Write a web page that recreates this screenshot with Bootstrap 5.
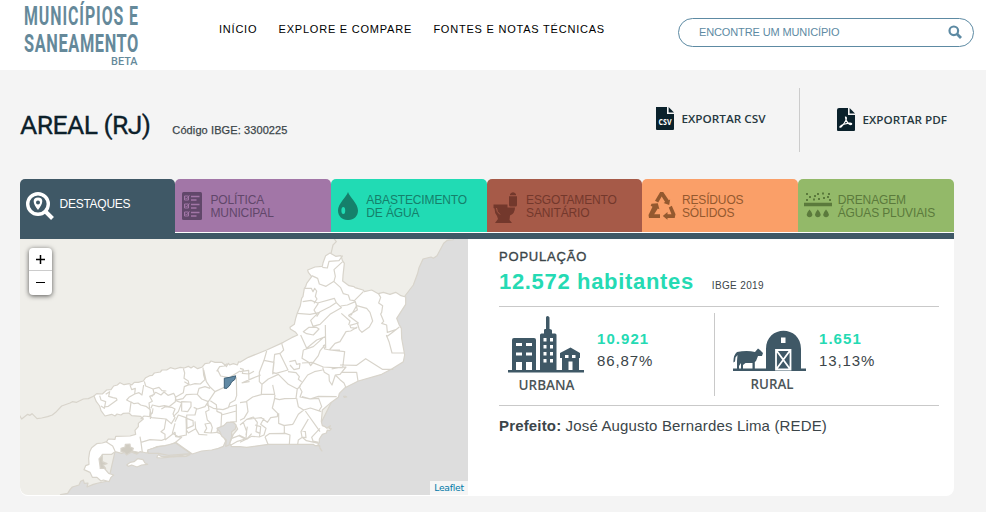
<!DOCTYPE html>
<html lang="pt-BR">
<head>
<meta charset="utf-8">
<meta name="viewport" content="width=device-width, initial-scale=1">
<title>Municípios e Saneamento</title>
<link href="https://cdn.jsdelivr.net/npm/bootstrap@5.3.0/dist/css/bootstrap.min.css" rel="stylesheet">
<style>
body{background:#f4f4f4;font-family:"Liberation Sans",Arial,sans-serif;color:#3b4549;height:512px;overflow:hidden}
svg{display:block;flex:none}
svg text{font-family:"Open Sans",sans-serif}
.site-head{height:70px;padding:0 12px 0 20px}
.brand-logo{padding:0}
.brand-logo svg{overflow:visible}
.brand-logo text{font-family:Roboto,sans-serif}
.main-links{margin-left:76px;gap:21.3px;height:58px;font-size:11px;letter-spacing:.78px}
.main-links a{color:#000;padding:0;white-space:nowrap}
.search-box{width:296px;height:29px;margin-top:18px;border:1px solid #5d8aa3;border-radius:15px;padding:0 11px 0 20px;font-size:11px;color:#5d8aa3}
.search-box span{letter-spacing:-.12px}
.page-wrap{width:934px;margin-left:20px}
.title-row{height:109px}
.city-name{font:400 26.5px/32px Roboto,sans-serif;letter-spacing:-.57px;color:#0d212b;margin:39px 0 0;-webkit-text-stroke:.3px #0d212b}
.ibge-code{font-size:11px;line-height:14px;margin:53px 0 0 22px;letter-spacing:.1px;-webkit-text-stroke:.25px #3b4549}
.export-area{margin-top:18px}
.export-csv{width:144px;height:64px;border-right:1px solid #ccc}
.export-pdf{margin-left:37px;height:64px}
.theme-tabs{height:60px;background:linear-gradient(#f4f4f4 0 53px,#fff 53px 54px,#3f5866 54px)}
.theme-tab{flex:1 1 0;height:53px;border-radius:5px 5px 0 0;padding:13px 0 0 6px;gap:5.5px;font-size:12px;line-height:13px;letter-spacing:-.14px;text-decoration:none}
.theme-tab span{padding-top:2px}
.tab-dest{background:#3f5866;color:#fff;height:60px;flex:0 0 155px}
.tab-dest span{padding-top:6px;letter-spacing:-.25px}
.tab-pol{background:#a276a7;color:#61476a}
.tab-agua{background:#21dbb4;color:#15806b}
.tab-esg{background:#a65a48;color:#73382c}
.tab-res{background:#fa9f68;color:#94592f}
.tab-dren{background:#93b969;color:#5b7a3c}
.data-panel{height:257px;border-radius:0 0 8px 8px;overflow:hidden}
.map-pane{width:448px;height:256px;border-bottom-left-radius:8px;overflow:hidden;flex:none}
.zoom-ctl{left:9px;top:9px;width:23px;border-radius:4px;box-shadow:0 1px 5px rgba(0,0,0,.65);overflow:hidden}
.zoom-ctl a{height:22px;color:#000}
.zoom-ctl a+a{border-top:1px solid #ccc;height:25px;padding-bottom:1px}
.map-credit{right:0;bottom:0;width:38px;height:14px;background:rgba(255,255,255,.7);color:#0078a8;font:9.2px/14px "DejaVu Sans",sans-serif;text-align:center;text-decoration:none;letter-spacing:-.25px}
.facts{width:440px;margin-left:31px}
.facts .fact-title{font-size:13px;line-height:18px;padding-top:9px;letter-spacing:.8px;-webkit-text-stroke:.35px #3b4549}
.pop-line{height:40px;line-height:26px;padding-top:3px}
.pop-total{font-size:22px;letter-spacing:.67px;color:#25dab3}
.pop-src{font-size:10px;margin-left:18px;letter-spacing:.35px;padding-top:4px}
.split-row{height:100px;border-top:1px solid #c9c9c9;border-bottom:1px solid #c9c9c9;padding-top:6px}
.urban{width:216px;height:83px;border-right:1px solid #c9c9c9}
.nums{font-size:15px;line-height:22px;letter-spacing:1.05px;padding-top:15px}
.nums b{color:#25dab3;display:block}
.nums em{font-style:normal;letter-spacing:.9px;display:block}
.mayor{font-size:15px;line-height:20px;padding-top:10px;letter-spacing:.16px;white-space:nowrap}
</style>
</head>
<body>
<header class="site-head bg-white d-flex">
  <a class="brand-logo navbar-brand m-0" href="#">
    <svg width="123" height="70" fill="#65899a" font-weight="700">
      <text x="4" y="25.400" font-size="25.500" letter-spacing="1.500" textLength="115" lengthAdjust="spacingAndGlyphs">MUNICÍPIOS E</text>
      <text x="4" y="51.500" font-size="26.500" letter-spacing="1" textLength="115" lengthAdjust="spacingAndGlyphs">SANEAMENTO</text>
      <text x="91" y="64.500" font-size="10.500" font-weight="500" textLength="26.500" lengthAdjust="spacingAndGlyphs">BETA</text>
    </svg>
  </a>
  <nav class="main-links nav align-items-center flex-nowrap">
    <a class="nav-link" href="#">INÍCIO</a>
    <a class="nav-link" href="#">EXPLORE E COMPARE</a>
    <a class="nav-link" href="#">FONTES E NOTAS TÉCNICAS</a>
  </nav>
  <div class="search-box ms-auto d-flex align-items-center justify-content-between">
    <span>ENCONTRE UM MUNICÍPIO</span>
    <svg width="14" height="16" viewBox="0 0 14 16" fill="none" stroke="#5d8aa3"><circle cx="5.800" cy="5.800" r="4.300" stroke-width="2.200"/><path d="M8.800 8.800l4.200 4.200" stroke-width="2.800"/></svg>
  </div>
</header>

<main class="page-wrap">
  <div class="title-row d-flex">
    <h1 class="city-name">AREAL (RJ)</h1>
    <div class="ibge-code">Código IBGE: 3300225</div>
    <div class="export-area d-flex ms-auto">
      <a class="export-csv" href="#">
        <svg width="120" height="64"><path d="M0 19h11v7h7v15q0 1-1 1H1q-1 0-1-1z" fill="#0a212b"/><path d="M12.600 19l5.400 5.600h-5.400z" fill="#0a212b"/><text x="2.600" y="36.800" font-size="8" font-weight="700" fill="#fff" textLength="13" lengthAdjust="spacingAndGlyphs">CSV</text><text x="25.500" y="34.500" font-size="11.200" font-weight="600" fill="#263840" textLength="84" lengthAdjust="spacingAndGlyphs">EXPORTAR CSV</text></svg>
      </a>
      <a class="export-pdf" href="#">
        <svg width="117" height="64"><path d="M2 20h9v7h7v15q0 1-1 1H1q-1 0-1-1V22q0-2 2-2z" fill="#0a212b"/><path d="M12.600 20l5.400 5.600h-5.400z" fill="#0a212b"/><path d="M8.500 29c2 0 .7 5-4.500 10-2.500 1.200-1-2 4-3 4-1.200 7.500-1.200 6.500.3-1.500 1-6-2-6-7.300z" fill="none" stroke="#fff" stroke-width="1.200"/><text x="25.500" y="35.500" font-size="11.200" font-weight="600" fill="#263840" textLength="84.500" lengthAdjust="spacingAndGlyphs">EXPORTAR PDF</text></svg>
      </a>
    </div>
  </div>

  <nav class="theme-tabs d-flex">
    <a class="theme-tab tab-dest d-flex" href="#">
      <svg width="28" height="28" viewBox="0 0 28 28"><circle cx="12" cy="12" r="10.300" fill="none" stroke="#fff" stroke-width="3.400"/><path d="M19 19l7.500 7.500" stroke="#fff" stroke-width="4"/><path fill="#fff" fill-rule="evenodd" d="M12 5.500c-6 0-5.500 6 0 12.500 5.500-6.500 6-12.500 0-12.500zm0 3a2 2 0 1 1 0 4 2 2 0 0 1 0-4z"/></svg>
      <span>DESTAQUES</span>
    </a>
    <a class="theme-tab tab-pol d-flex" href="#">
      <svg width="24" height="28" viewBox="0 0 24 28"><rect x="1" width="20" height="28" rx="1.500" fill="#61476a"/><g fill="none" stroke="#a276a7" stroke-width="1"><path d="M3.500 4h4v4h-4zM3.500 12h4v4h-4zM3.500 20h4v4h-4z"/><path d="M4 5.500l1.500 1.500 3-3.500M4 13.500l1.500 1.500 3-3.500M4 21.500l1.500 1.500 3-3.500"/><path d="M10 4.500h8.500M10 8h5.500M10 12.500h8.500M10 16h5.500M10 20.500h8.500M10 24h5.500" stroke-width="1.400"/></g></svg>
      <span>POLÍTICA<br>MUNICIPAL</span>
    </a>
    <a class="theme-tab tab-agua d-flex" href="#">
      <svg width="24" height="28" viewBox="0 0 24 28"><path d="M11 0c-1.500 5-10 11.500-10 18.500 0 12.700 20 12.700 20 0C21 11.500 12.500 5 11 0z" fill="#15806b"/><ellipse cx="6.300" cy="18.500" rx="1.900" ry="3.500" fill="#21dbb4"/></svg>
      <span>ABASTECIMENTO<br>DE ÁGUA</span>
    </a>
    <a class="theme-tab tab-esg d-flex" href="#">
      <svg width="28" height="32" viewBox="0 0 28 32" fill="#73382c"><path d="M17 2q3-3.500 6 0v1.200h-6zM16 4.300h8V13q0 1.500-1.500 1.500h-5Q16 14.500 16 13zM.5 12.500h14v3H22q0 6-5 8l-.5 4.500 2.500 3H2l3-4-1-3q-2.500-3-2.500-7.500l-1-.5z"/><path d="M3.500 16q0 4 3.500 6.500" fill="none" stroke="#a65a48"/></svg>
      <span>ESGOTAMENTO<br>SANITÁRIO</span>
    </a>
    <a class="theme-tab tab-res d-flex" href="#">
      <svg width="28" height="28" viewBox="0 0 28 28" fill="#94592f"><path d="M12.200 0h3l5.600 8.200 1.300-.7-.9 5.500-5.600-2 1.500-1-3.400-5.500-3.500 6-3.200-1.800zM3.500 11.700l6.300-.5 1.600 6-1.600-.7-3.600 5.700H12v3.800H1L.5 23l4-8.300-1.800-1zM20.800 15.500l3-1.700 3.700 8.400-.8 3.800h-7.200v1.700l-4.700-3.800 4.700-4v2.300h4z"/></svg>
      <span>RESÍDUOS<br>SÓLIDOS</span>
    </a>
    <a class="theme-tab tab-dren d-flex" href="#">
      <svg width="28" height="28" viewBox="0 0 28 28" fill="#5b7a3c"><path d="M0 10.800h28v3.400H0zM2 1h2v2H2zM5 4h2v2H5zM2 7h2v2H2zM10 3h2v2h-2zM9 6.500h2v2H9zM13 1h2v2h-2zM14 6h2v2h-2zM18 .500h2v2h-2zM19 5h2v2h-2zM24 1h2v2h-2zM23 4h2v2h-2zM25 7h2v2h-2z"/><path id="rain" d="M5.500 17.500q-2.800 3.300-2.800 5c0 3.600 5.700 3.600 5.700 0q0-1.700-2.900-5z"/><use href="#rain" x="8.300"/><use href="#rain" x="16.500"/></svg>
      <span>DRENAGEM<br>ÁGUAS PLUVIAIS</span>
    </a>
  </nav>

  <section class="data-panel bg-white d-flex">
    <div class="map-pane position-relative">
      <svg width="448" height="256" viewBox="0 0 448 256">
        <rect width="448" height="256" fill="#efeee9"/>
        <g transform="translate(-5 -4) scale(.33333)" stroke="#d8d4cb" stroke-width="3.600" stroke-linejoin="round" fill="none">
          <path fill="#ddd" d="M130 790L137 779 158 775 165 764 172 756 192 750 197 739 205 735 208 745 219 744 216 756 235 748 250 744 280 738 300 650 500 600 900 600 1000 400 1172 180 1195 150 1208 115 1212 98 1224 72 1248 66 1255 70 1266 62 1286 25 1297 16 1315 14 1316 8 1400 8 1400 790z"/>
          <path d="M10 535L20 552 38 538 45 541 51 536 66 551 80 549 98 545 112 540 122 532 140 513 165 504 172 500 185 502 205 492 220 491 237 483M955 8L964 20 954 30 948 56"/>
          <path fill="#fff" d="M237 483L245 476 262 477 275 465 288 464 296 453 307 450 315 443 327 449 343 446 350 450 358 442 370 442 385 438 392 428 404 422 412 421 418 414 436 411 441 405 455 405 466 398 480 402 496 397 508 399 520 394 528 399 536 394 548 401 562 396 570 386 583 384 588 378 600 382 620 382 630 390 634 395 640 385 644 390 655 386 667 390 671 380 675 382 700 367 755 345 805 322 830 308 848 300 842 292 826 282 825 277 838 268 842 250 847 234 856 212 860 190 864 184 868 160 872 155 875 145 890 125 880 112 878 105 900 96 922 94 924 84 932 62 945 54 962 64 978 62 982 76 988 85 984 122 983 138 1002 152 1017 155 1020 158 1044 165 1048 170 1070 165 1090 176 1105 172 1125 178 1142 172 1158 182 1172 186 1172 208 1145 250 1152 268 1159 280 1160 310 1169 360 1165 380 1130 402 1100 418 1030 438 990 458 973 475 970 487 945 505 922 525 919 560 922 572 930 575 936 580 946 572 942 581 949 581 944 587 937 585 934 594 922 598 913 612 913 623 909 628 921 648 915 641 914 632 900 632 895 628 760 628 695 637 675 635 650 635 644 625 648 616 655 598 668 582 662 570 655 562 636 563 628 574 608 580 606 592 614 595 626 605 632 618 625 634 610 640 590 645 560 648 532 657 505 638 482 622 460 632 425 635 415 640 400 645 396 654 375 650 365 657 340 648 320 655 300 650 290 658 262 658 258 670 262 680 256 700 268 700 275 708 281 715 296 720 288 727 282 740 265 735 258 738 246 727 232 727 225 712 207 704 212 692 222 688 221 670 224 650 230 638 245 626 262 624 275 620 280 612 300 613 302 604 345 603 362 598 360 586 370 575 370 565 385 552 377 544 350 542 342 534 325 535 318 540 306 537 300 543 290 538 270 543 258 527 254 513 244 500z"/>
          <path fill="#fff" d="M335 690L346 682 357 680 368 671 384 674 390 684 398 688 380 690 366 696 350 690 340 694zM427 663L431 659 440 665 470 664 525 659 515 664 485 665 440 669 426 668z"/>
          <path fill="#ddd" d="M398 645L430 635 450 632 482 624 528 656 460 661 430 655 400 655zM606 580L626 572 636 562 655 562 663 570 661 582 650 590 650 606 642 630 632 634 634 615 620 603 615 591z"/>
          <path fill="#d0ccc2" d="M318 640L330 636 331 628 345 627 346 636 355 640 352 648 370 652 365 657 350 650 335 660 328 652 318 650zM252 672L262 660 262 680 276 686 264 690 272 700 256 700z"/>
          <path d="M254 482L258 495 272 500 268 520 258 513M272 478L284 470 281 484 294 488 304 490 306 495 280 514 268 516M345 450L350 464 361 460 359 477 342 487 335 495 348 502 344 532M359 477L372 473 381 480 386 450M388 439L392 453 414 462 418 478 404 484 412 499 402 504 404 522 408 535 406 552M414 462L432 457 441 467 454 468M410 485L422 472 438 480 447 471 459 481 476 475 482 487 481 500 462 515 448 512 432 515 412 510 408 520M347 500L357 506 369 504 377 510 393 514 406 524 404 545 387 543 377 552M505 400L509 414 507 430 520 438 522 449 508 455 505 473 481 487 484 498M508 440L525 450 540 446 556 447 570 434 566 420 564 398M566 405L574 440 585 456 600 470 580 500 560 492 547 478 552 460 570 455 585 460M600 470L636 453 664 428 665 482 660 496 645 504 640 518 624 524 595 520 576 510M605 409L614 395 628 393 636 386M608 405L617 423 642 428 675 408M480 496L504 491 514 479 547 477M500 500L528 501 528 515 518 530 500 528zM484 498L500 503 490 530 475 545M439 522L451 515 470 517 480 522 474 537 480 548 469 566 453 552 410 548 404 542 412 534 414 520M545 520L540 540 515 540 516 580 535 572 534 557 515 550M536 517L548 522 570 515 580 500M480 565L472 595 490 605 514 600 514 575 513 548 490 540 480 560M540 559L542 581 520 594 514 585M542 581L552 598 577 600M570 567L587 564 592 578 588 594 568 592 575 580zM578 500L582 525 572 530 577 555 588 565M586 497L604 509 606 529 620 535 618 575M619 540L664 528 664 508M642 516L664 510 664 560 645 562M450 615L480 592 482 605 500 607 482 622M273 620L293 633 300 648M378 622L382 652M375 605L378 622 405 614 440 616 450 612 450 598 438 590 448 582 453 552M650 610L672 602 690 612M672 600L696 612 710 596M648 630L665 620 690 612M588 594L606 592"/>
        </g>
        <g transform="translate(220 -4) scale(.33333)" stroke="#d8d4cb" stroke-width="3.600" stroke-linejoin="round" fill="none">
          <path d="M247 97L262 99 267 79 297 77 308 62M215 122L233 130 238 147 258 154 282 139 286 124 282 104 308 80M282 140L302 158 310 176 325 180 330 195 343 197 370 170M195 160L214 160 219 170 224 160 230 168 226 184 231 192 222 205M188 200L213 196 233 204 283 190 289 203 304 218 270 238 240 268 219 274 212 256 230 238 222 225 235 205M172 235L210 238 240 232M230 245L240 230 270 215 288 203M302 213L322 210 346 200 352 225 328 239 326 242 355 264 330 271 332 278 350 280M304 235L330 258 326 270M345 198L350 212 380 220 390 232 398 258 388 276 366 292 358 284 352 264M350 212L334 240 326 240M352 276L332 288 318 290 300 320 285 325 268 345M190 290L207 277 229 277 237 282 220 300 200 296zM256 270L257 340M257 305L230 315 200 340 182 300M415 175L422 187 416 204 428 212 425 232 422 237 431 259 425 265 440 270 442 292 470 283M439 300L447 320 456 354H492M439 306L460 290 478 276M125 325L131 345 120 356 144 405 108 415 98 412 104 358 120 355M80 348L72 376 102 382 98 418M72 376L58 412 58 440 66 448 64 478 104 478 98 450M190 345L186 370 206 382 212 392 235 362 240 348 256 328M190 345L220 335 250 308M250 330L254 342 270 345 314 350 308 398 280 398 250 396 216 382 186 384M268 345L300 345M300 390L350 391 377 371 427 403H460M275 402L295 398 318 396 300 418 285 420M305 412L350 412 354 438M248 398L253 412 267 420 268 438 276 450 286 420 300 434 312 444 318 458M248 405L223 410 203 420 178 455 186 470 180 486 210 492 235 484 290 485M185 440L175 433 178 425 168 413 144 410M148 380L166 376 170 388 180 386 178 400 162 404 150 390M66 448L85 432 115 418 145 448 172 462 182 452M0 400L10 403 7 415 27 417 42 409M0 410L26 406 27 440 5 444M5 444L37 430 62 420M0 503L20 500 24 530 12 550 0 556M18 500L38 486 66 478M105 480L103 495 97 519 113 535 112 545 92 548 82 562 64 548 20 553M104 490L118 494 134 491 168 490 172 460M116 535L116 565 133 572 133 598M170 490L175 515 191 525 211 519 244 530M186 485L212 492 236 490 245 515 236 528M191 525L175 538 162 562 158 568 130 572M196 528L240 590M205 552L183 590 186 606 198 608 196 590 184 586M75 605L88 596 136 595 150 600 148 628M75 605L84 628M173 628L175 615 187 607 199 617 236 625M215 606L219 618 236 622M214 608L240 580M0 570L10 562 20 553 40 546 52 562 48 590 60 595 58 606 72 600 78 580 62 568 72 550M0 622L20 612 35 604 60 606M22 575L18 600M10 562L20 590 18 610M45 570L62 575 60 596M311 484H317L320 486 313 487z"/>
        </g>
        <path d="M204.300 139.200L210 138.300 215.700 136.800 214.800 140.500 211.500 143 210 146 207 149.300 204.300 149.300z" fill="#6189a4" stroke="#3f6178" stroke-width="1"/>
      </svg>
      <div class="zoom-ctl position-absolute bg-white">
        <a class="d-flex align-items-center justify-content-center" href="#" aria-label="Aproximar"><svg width="9" height="9"><path d="M4.500 0v9M0 4.500h9" stroke="#000" stroke-width="1.500"/></svg></a>
        <a class="d-flex align-items-center justify-content-center" href="#" aria-label="Afastar"><svg width="9" height="9"><path d="M0 4.500h9" stroke="#000" stroke-width="1.200"/></svg></a>
      </div>
      <a class="map-credit position-absolute" href="#">Leaflet</a>
    </div>

    <div class="facts">
      <div class="fact-title">POPULAÇÃO</div>
      <div class="pop-line d-flex"><strong class="pop-total">12.572 habitantes</strong><span class="pop-src">IBGE 2019</span></div>
      <div class="split-row d-flex">
        <div class="urban d-flex">
          <svg width="98" height="83"><g fill="#3f5866"><path d="M9 57h76v2.500H9zM13 27q0-2 2-2h20q2 0 2 2v31H13zM41 22q0-1.500 1.500-1.500H45V17q0-1 1.500-1H47V4.500q0-1.500 1.500-1.500t2 1.500V16q2.500 0 2.500 1.500v3h3q1.500 0 1.500 1.500v36H41zM61 40l10.500-5.500L81 40v5h-1v13H63V45h-2z"/></g><path fill="#fff" d="M17 30h6v3h-6zM27 30h6v3h-6zM17 39.500h6v3h-6zM27 39.500h6v3h-6zM17 49h6v8h-6zM27 49h6v8h-6zM44.500 25h3v3.500h-3zM51 25h3v3.500h-3zM44.500 32h3v3.500h-3zM51 32h3v3.500h-3zM44.500 39h3v3.500h-3zM51 39h3v3.500h-3zM44.500 46h3v3.500h-3zM51 46h3v3.500h-3zM66 42h3.500v3H66zM73 42h3.500v3H73zM69.500 48.500h4V57h-4z"/><text x="19.500" y="77" font-size="13.500" font-weight="600" fill="#4c5558" textLength="56" lengthAdjust="spacingAndGlyphs">URBANA</text></svg>
          <div class="nums"><b>10.921</b><em>86,87%</em></div>
        </div>
        <div class="d-flex">
          <svg width="104" height="83"><path fill="#3f5866" d="M18 55.500h73V58H18zM51 57V36c0-24.500 35-24.500 35 0v21zM22 39q10-2 18 0l3-3.500 2 1.500 3 3-1 3h-4l-2 5-1.200 1V56h-2.300v-6h-7L28 52v4h-2v-6l-2 3v3h-2v-8l.500-6-2 2.500-.5 4-1.500 1q-.500-7 3.500-10.500z"/><path fill="#fff" d="M66 24.500h4.500v5.500H66z"/><path fill="none" stroke="#fff" stroke-width="1.800" d="M61 37h14.500v19.500H61zM61.500 37.500L75 56M75 37.500L61.500 56"/><text x="35.500" y="76" font-size="13.500" font-weight="600" fill="#4c5558" textLength="43" lengthAdjust="spacingAndGlyphs">RURAL</text></svg>
          <div class="nums"><b>1.651</b><em>13,13%</em></div>
        </div>
      </div>
      <div class="mayor"><strong>Prefeito:</strong> José Augusto Bernardes Lima (REDE)</div>
    </div>
  </section>
</main>
<script src="https://cdn.jsdelivr.net/npm/bootstrap@5.3.0/dist/js/bootstrap.bundle.min.js"></script>
</body>
</html>
